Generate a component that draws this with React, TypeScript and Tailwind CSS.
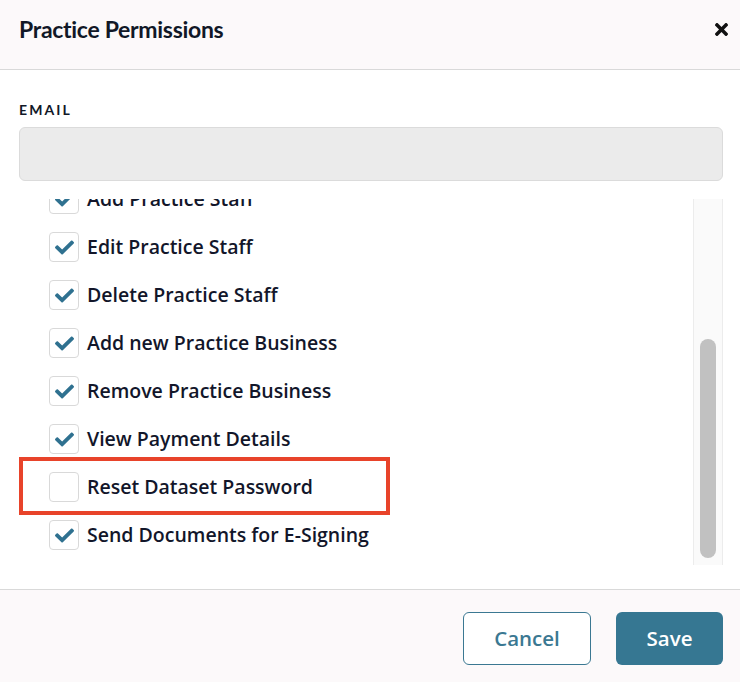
import React from 'react';
import { FaCheck, FaTimes } from 'react-icons/fa';

const permissions = [
  { label: 'Add Practice Staff', checked: true },
  { label: 'Edit Practice Staff', checked: true },
  { label: 'Delete Practice Staff', checked: true },
  { label: 'Add new Practice Business', checked: true },
  { label: 'Remove Practice Business', checked: true },
  { label: 'View Payment Details', checked: true },
  { label: 'Reset Dataset Password', checked: false },
  { label: 'Send Documents for E-Signing', checked: true },
];

const App: React.FC = () => {
  return (
    <div className="w-[740px] h-[682px] bg-white flex flex-col overflow-hidden">
      {/* Header */}
      <div className="h-[70px] shrink-0 bg-[#fcf9fa] border-b border-[#d9d9d9] flex items-center justify-between pl-[19px] pr-[9px] pb-[10px]">
        <h1 className="font-['Lato',sans-serif] font-bold text-[23px] text-[#111827] tracking-[-0.3px]">Practice Permissions</h1>
        <FaTimes className="text-[#111] w-[19px] h-[19px]" />
      </div>

      {/* Body */}
      <div className="flex-1 flex flex-col px-[19px] pr-[17px] pt-[31px]">
        <label className="font-['Lato',sans-serif] font-bold text-[14px] tracking-[0.15em] text-[#111827] leading-[18px]">EMAIL</label>
        <div className="mt-[8px] h-[54px] bg-[#ebebeb] border border-[#dbdbdb] rounded-[6px]" />

        <div className="relative mt-[18px] h-[366px] flex">
          <div className="flex-1 overflow-hidden">
            <ul className="-mt-[24px] pl-[30px]">
              {permissions.map((p) => (
                <li key={p.label} className="h-[48px] flex items-center gap-[8px]">
                  <span className="w-[30px] h-[30px] rounded-[4px] border border-[#d9d9d9] bg-white flex items-center justify-center">
                    {p.checked && <FaCheck className="text-[#2f7190] w-[19px] h-[19px]" />}
                  </span>
                  <span className="font-['Open_Sans',sans-serif] font-semibold text-[19.5px] text-[#12162a]">{p.label}</span>
                </li>
              ))}
            </ul>
          </div>

          {/* Scrollbar */}
          <div className="w-[30px] h-full bg-[#fafafa] border-x border-[#ececec] flex flex-col pt-[140px] pb-[7px] items-center">
            <div className="w-[16px] flex-1 rounded-full bg-[#c1c1c1]" />
          </div>

          {/* Annotation highlight */}
          <div className="absolute left-0 top-[258px] w-[371px] h-[58px] border-4 border-[#e8432a] pointer-events-none" />
        </div>
      </div>

      {/* Footer */}
      <div className="h-[93px] shrink-0 bg-[#fcf9fa] border-t border-[#d9d9d9] flex items-start justify-end gap-[25px] pt-[22px] pr-[17px]">
        <button className="w-[128px] h-[53px] rounded-[6px] border border-[#3b7892] bg-white text-[#3b7892] font-['Open_Sans',sans-serif] font-semibold text-[20.5px]">
          Cancel
        </button>
        <button className="w-[107px] h-[53px] rounded-[6px] bg-[#367792] text-white font-['Open_Sans',sans-serif] font-semibold text-[20.5px]">
          Save
        </button>
      </div>
    </div>
  );
};

export default App;
